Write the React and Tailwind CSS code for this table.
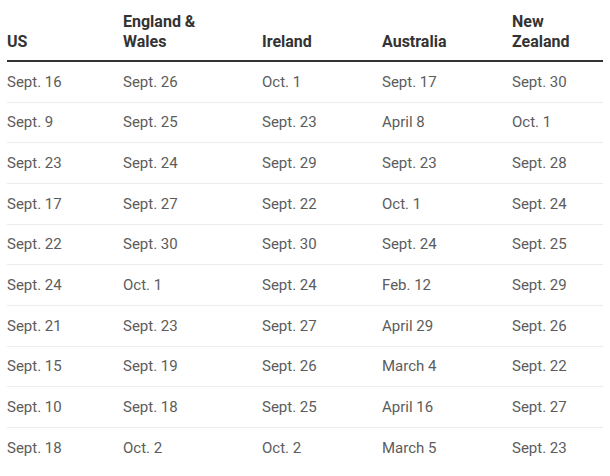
export default function App() {
  const headers = [
    ["US"],
    ["England &", "Wales"],
    ["Ireland"],
    ["Australia"],
    ["New", "Zealand"],
  ];
  const rows = [
    ["Sept. 16", "Sept. 26", "Oct. 1", "Sept. 17", "Sept. 30"],
    ["Sept. 9", "Sept. 25", "Sept. 23", "April 8", "Oct. 1"],
    ["Sept. 23", "Sept. 24", "Sept. 29", "Sept. 23", "Sept. 28"],
    ["Sept. 17", "Sept. 27", "Sept. 22", "Oct. 1", "Sept. 24"],
    ["Sept. 22", "Sept. 30", "Sept. 30", "Sept. 24", "Sept. 25"],
    ["Sept. 24", "Oct. 1", "Sept. 24", "Feb. 12", "Sept. 29"],
    ["Sept. 21", "Sept. 23", "Sept. 27", "April 29", "Sept. 26"],
    ["Sept. 15", "Sept. 19", "Sept. 26", "March 4", "Sept. 22"],
    ["Sept. 10", "Sept. 18", "Sept. 25", "April 16", "Sept. 27"],
    ["Sept. 18", "Oct. 2", "Oct. 2", "March 5", "Sept. 23"],
  ];
  const cols = "grid grid-cols-[116px_139px_120px_130px_93px]";
  return (
    <div className="w-[610px] h-[476px] bg-white px-[7px] font-['Roboto',sans-serif]">
      <div className={`${cols} pt-[12px] pb-[8px] border-b-2 border-[#333]`}>
        {headers.map((h, i) => (
          <div key={i} className="flex flex-col justify-end text-[16px] leading-[20px] font-bold text-[#333]">
            {h.map((l, j) => (
              <span key={j}>{l}</span>
            ))}
          </div>
        ))}
      </div>
      {rows.map((r, i) => (
        <div
          key={i}
          className={`${cols} h-[40.67px] items-center ${i < rows.length - 1 ? "border-b border-[#ececec]" : ""}`}
        >
          {r.map((c, j) => (
            <div key={j} className="text-[15px] leading-[20px] text-[#5c5c5c]">
              {c}
            </div>
          ))}
        </div>
      ))}
    </div>
  );
}
